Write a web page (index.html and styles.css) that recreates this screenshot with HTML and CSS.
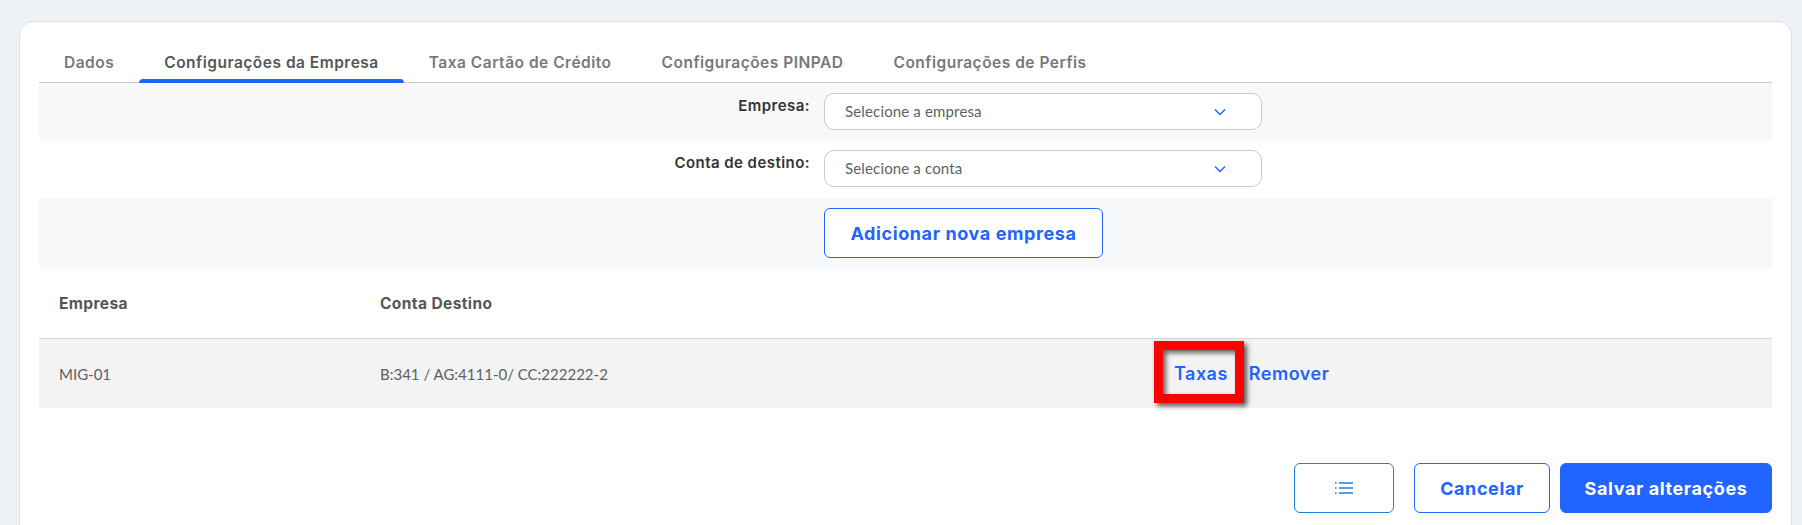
FILE: index.html
```html
<!DOCTYPE html>
<html lang="pt-BR">
<head>
<meta charset="utf-8">
<title>Configurações da Empresa</title>
<link rel="stylesheet" href="styles.css">
</head>
<body>
<main class="card">
  <nav class="tabs">
    <a class="tab">Dados</a>
    <a class="tab tab-active">Configurações da Empresa</a>
    <a class="tab">Taxa Cartão de Crédito</a>
    <a class="tab">Configurações PINPAD</a>
    <a class="tab">Configurações de Perfis</a>
  </nav>
  <section class="form">
    <div class="form-row form-row-first form-row-alt">
      <label class="form-label">Empresa:</label>
      <div class="select"><span>Selecione a empresa</span>
        <svg class="chevron" viewBox="0 0 12 8"><path d="M1 1.5l5 5 5-5" fill="none" stroke="#2164ff" stroke-width="1.5"/></svg>
      </div>
    </div>
    <div class="form-row">
      <label class="form-label">Conta de destino:</label>
      <div class="select"><span>Selecione a conta</span>
        <svg class="chevron" viewBox="0 0 12 8"><path d="M1 1.5l5 5 5-5" fill="none" stroke="#2164ff" stroke-width="1.5"/></svg>
      </div>
    </div>
    <div class="form-row form-row-alt form-row-action">
      <span class="form-label"></span>
      <button class="btn btn-add">Adicionar nova empresa</button>
    </div>
  </section>
  <section class="table">
    <div class="table-head">
      <div class="cell-first">Empresa</div>
      <div class="cell-second">Conta Destino</div>
      <div></div>
    </div>
    <div class="table-row">
      <div class="cell-first">MIG-01</div>
      <div class="cell-second">B:341 / AG:4111-0/ CC:222222-2</div>
      <div class="actions">
        <a class="action">Taxas</a>
        <a class="action">Remover</a>
        <span class="highlight"></span>
      </div>
    </div>
  </section>
  <footer class="footer">
    <button class="btn btn-list" aria-label="Lista">
      <svg class="list-icon" viewBox="0 0 18 12"><path d="M4 1h14M4 6h14M4 11h14" stroke="#1a80e0" stroke-width="1.5" fill="none"/><path d="M0 1h1.6M0 6h1.6M0 11h1.6" stroke="#1a80e0" stroke-width="1.5" fill="none"/></svg>
    </button>
    <button class="btn btn-cancel">Cancelar</button>
    <button class="btn btn-save">Salvar alterações</button>
  </footer>
</main>
</body>
</html>
```
FILE: styles.css
```css
html, body { margin: 0; height: 100%; overflow: hidden; }
body {
  background: #eef1f6;
  padding: 21px 10px 0 19px;
  box-sizing: border-box;
  font-family: Inter, "Liberation Sans", sans-serif;
}
.card {
  background: #fff;
  border: 1px solid #dfe1e6;
  border-radius: 14px;
  padding: 21px 19px 30px;
}
.tabs {
  display: flex;
  height: 39px;
  border-bottom: 1px solid #c9cacc;
}
.tab {
  position: relative;
  padding: 0 25px;
  line-height: 40px;
  font-size: 15.5px;
  font-weight: 600;
  letter-spacing: .5px;
  color: #77787c;
  white-space: nowrap;
}
.tab-active { color: #55565a; }
.tab-active::after {
  content: "";
  position: absolute;
  left: 0;
  right: 0;
  bottom: -1px;
  height: 4px;
  background: #2164ff;
  border-radius: 4px 4px 0 0;
}
.form-row {
  display: flex;
  gap: 14px;
  height: 58px;
  padding-top: 10px;
  box-sizing: border-box;
}
.form-row-first { height: 57px; }
.form-row-alt { background: #f7f8fa; }
.form-row-action { height: 70px; }
.form-label {
  width: 771px;
  text-align: right;
  font-size: 15px;
  font-weight: 600;
  letter-spacing: .45px;
  line-height: 26px;
  color: #333;
}
.select {
  width: 438px;
  height: 37px;
  box-sizing: border-box;
  display: flex;
  align-items: center;
  justify-content: space-between;
  padding: 0 35px 2px 20px;
  background: #fff;
  border: 1px solid #c9cacc;
  border-radius: 10px;
  font-family: Lato, sans-serif;
  font-size: 15px;
  letter-spacing: .15px;
  color: #5e5f63;
}
.chevron { width: 12px; height: 8px; position: relative; top: 1px; }
.btn {
  box-sizing: border-box;
  height: 50px;
  border-radius: 6px;
  border: 1px solid #2164ff;
  background: #fff;
  color: #2164ff;
  font-family: Inter, "Liberation Sans", sans-serif;
  font-size: 18px;
  font-weight: 700;
  letter-spacing: .6px;
  padding: 0;
  cursor: pointer;
}
.btn-add { width: 279px; }
.table-head, .table-row {
  display: grid;
  grid-template-columns: 321px 794px 1fr;
  align-items: center;
}
.table-head {
  height: 71px;
  border-bottom: 1px solid #d6d6d6;
  box-sizing: border-box;
  font-size: 15.5px;
  font-weight: 700;
  letter-spacing: .4px;
  color: #55565a;
}
.table-row {
  height: 69px;
  background: #f3f3f3;
  font-family: Lato, sans-serif;
  font-size: 15px;
  color: #5e5f63;
}
.cell-first, .cell-second { padding-left: 20px; }
.actions {
  position: relative;
  display: flex;
  align-items: center;
  gap: 21px;
  padding-left: 20px;
  height: 100%;
}
.action {
  font-family: Inter, "Liberation Sans", sans-serif;
  font-size: 18px;
  font-weight: 600;
  letter-spacing: .5px;
  color: #2164ff;
}
.highlight {
  position: absolute;
  left: 0;
  top: 2px;
  width: 90px;
  height: 62px;
  box-sizing: border-box;
  border: 9px solid #f00;
  box-shadow: 3px 3px 5px rgba(0,0,0,.65), inset 3px 3px 5px rgba(0,0,0,.6);
  pointer-events: none;
}
.footer {
  display: flex;
  justify-content: flex-end;
  margin-top: 55px;
  gap: 10px;
}
.btn-list {
  width: 100px;
  margin-right: 10px;
  border-color: #1a80e0;
  display: flex;
  align-items: center;
  justify-content: center;
}
.list-icon { width: 18px; height: 12px; }
.btn-cancel { width: 136px; }
.btn-save { width: 212px; background: #2164ff; color: #fff; }
```
